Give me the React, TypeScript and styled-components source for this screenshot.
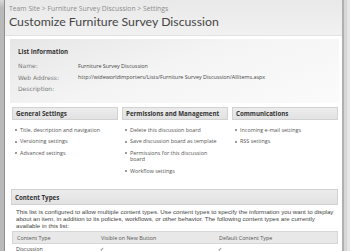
import React from "react";
import styled, { createGlobalStyle } from "styled-components";

const Global = createGlobalStyle`
  html, body { margin: 0; padding: 0; background: #dcdcdc; }
  body { width: 350px; height: 251px; overflow: hidden; }
`;

const seg = `"Open Sans", "Noto Sans", sans-serif`;
const verd = `"DejaVu Sans", Verdana, sans-serif`;
const arial = `"Liberation Sans", Arial, sans-serif`;

const Frame = styled.div`
  display: flex;
  width: 350px;
  height: 251px;
  overflow: hidden;
`;

const LeftRail = styled.div`
  width: 4px;
  flex: none;
  background: linear-gradient(#d8d8d8, #b9b9b9 8px, #b9b9b9);
  border-right: 1px solid #8e8e8e;
`;

const RightRail = styled.div`
  width: 6px;
  flex: none;
  background: #d6d6d6;
  border-left: 2px solid #b0b0b0;
  box-shadow: inset -3px 0 0 #e6e6e6;
`;

const Main = styled.div`
  flex: 1;
  display: flex;
  flex-direction: column;
  background: #fff;
  min-width: 0;
`;

const Header = styled.div`
  background: linear-gradient(#e9e9e9, #f1f1f1);
  padding: 5px 4px 4px 4px;
  height: 28px;
  border-bottom: 1px solid #e2e2e2;
`;

const Crumbs = styled.div`
  font-family: ${seg};
  font-size: 6.8px;
  line-height: 8px;
  color: #8c8c8c;
  white-space: nowrap;
`;

const Title = styled.h1`
  margin: 0;
  font-family: Lato, "Open Sans", sans-serif;
  font-weight: 400;
  font-size: 12.3px;
  line-height: 18px;
  color: #454545;
  white-space: nowrap;
`;

const Body = styled.div`
  padding: 3px 3px 0 5px;
  display: flex;
  flex-direction: column;
`;

const InfoBox = styled.div`
  background: linear-gradient(160deg, #e6e6e6 0%, #f4f4f4 45%, #fbfbfb 100%);
  padding: 9px 8px 10px 8px;
  height: 45px;
`;

const BoxTitle = styled.div`
  font-family: ${seg};
  font-weight: 700;
  font-size: 6.2px;
  line-height: 8px;
  color: #333;
  margin-bottom: 4px;
`;

const InfoRow = styled.div`
  display: grid;
  grid-template-columns: 60px 1fr;
  height: 11.5px;
  align-items: center;
`;

const Label = styled.span`
  font-family: ${verd};
  font-size: 6px;
  color: #7a7a7a;
`;

const Value = styled.span`
  font-family: ${seg};
  font-size: 5.4px;
  color: #444;
  white-space: nowrap;
`;

const Columns = styled.div`
  display: grid;
  grid-template-columns: repeat(3, 1fr);
  gap: 4px;
  padding: 4px 1px 0 2px;
  height: 80px;
`;

const Column = styled.div`
  display: flex;
  flex-direction: column;
`;

const Bar = styled.div<{ $h?: number }>`
  background: linear-gradient(#ececec, #e2e2e2);
  border: 1px solid #d2d2d2;
  font-family: ${seg};
  font-weight: 700;
  font-size: 6.2px;
  color: #333;
  padding: 0 3px;
  height: ${(p) => p.$h ?? 11}px;
  display: flex;
  align-items: center;
  white-space: nowrap;
`;

const Items = styled.ul`
  list-style: none;
  margin: 4px 0 0 0;
  padding: 0 0 0 3px;
`;

const Item = styled.li`
  position: relative;
  font-family: ${seg};
  font-size: 5.4px;
  line-height: 6.5px;
  color: #555;
  padding: 2.5px 0 2.5px 5px;
  max-width: 92px;
  &::before {
    content: "";
    position: absolute;
    left: 0;
    top: 5px;
    width: 2px;
    height: 2px;
    background: #9a9a9a;
  }
`;

const Section = styled.div`
  padding: 2px 1px 0 1px;
`;

const Para = styled.p`
  margin: 3px 0 2px 5px;
  font-family: ${arial};
  font-size: 6.15px;
  line-height: 7.1px;
  color: #444;
  white-space: nowrap;
`;

const TableHead = styled.div`
  display: grid;
  grid-template-columns: 84px 118px 1fr;
  background: #e8e8e8;
  border: 1px solid #d6d6d6;
  height: 11px;
  align-items: center;
  padding-left: 4px;
  margin-left: 1px;
  font-family: ${seg};
  font-size: 5.4px;
  color: #555;
`;

const TableRow = styled.div`
  display: grid;
  grid-template-columns: 84px 118px 1fr;
  height: 10px;
  align-items: center;
  padding-left: 5px;
  font-family: ${seg};
  font-size: 5.4px;
  color: #444;
`;

export default function App() {
  return (
    <>
      <Global />
      <Frame>
        <LeftRail />
        <Main>
          <Header>
            <Crumbs>Team Site &gt; Furniture Survey Discussion &gt; Settings</Crumbs>
            <Title>Customize Furniture Survey Discussion</Title>
          </Header>
          <Body>
            <InfoBox>
              <BoxTitle>List Information</BoxTitle>
              <InfoRow>
                <Label>Name:</Label>
                <Value>Furniture Survey Discussion</Value>
              </InfoRow>
              <InfoRow>
                <Label>Web Address:</Label>
                <Value>http://wideworldimporters/Lists/Furniture Survey Discussion/AllItems.aspx</Value>
              </InfoRow>
              <InfoRow>
                <Label>Description:</Label>
                <Value></Value>
              </InfoRow>
            </InfoBox>
            <Columns>
              <Column>
                <Bar>General Settings</Bar>
                <Items>
                  <Item>Title, description and navigation</Item>
                  <Item>Versioning settings</Item>
                  <Item>Advanced settings</Item>
                </Items>
              </Column>
              <Column>
                <Bar>Permissions and Management</Bar>
                <Items>
                  <Item>Delete this discussion board</Item>
                  <Item>Save discussion board as template</Item>
                  <Item>Permissions for this discussion board</Item>
                  <Item>Workflow settings</Item>
                </Items>
              </Column>
              <Column>
                <Bar>Communications</Bar>
                <Items>
                  <Item>Incoming e-mail settings</Item>
                  <Item>RSS settings</Item>
                </Items>
              </Column>
            </Columns>
            <Section>
              <Bar $h={14}>Content Types</Bar>
              <Para>
                This list is configured to allow multiple content types. Use content types to specify the information you want to display
                <br />
                about an item, in addition to its policies, workflows, or other behavior. The following content types are currently
                <br />
                available in this list:
              </Para>
              <TableHead>
                <span>Content Type</span>
                <span>Visible on New Button</span>
                <span>Default Content Type</span>
              </TableHead>
              <TableRow>
                <span>Discussion</span>
                <span>✓</span>
                <span>✓</span>
              </TableRow>
            </Section>
          </Body>
        </Main>
        <RightRail />
      </Frame>
    </>
  );
}
